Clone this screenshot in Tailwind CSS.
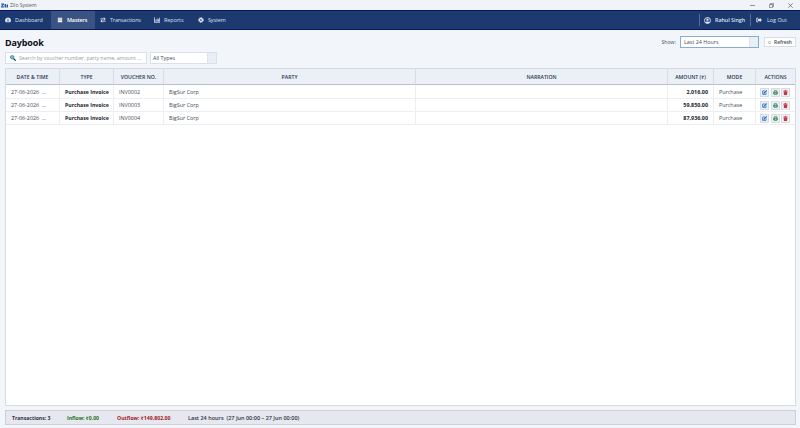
<!DOCTYPE html>
<html lang="en">
  <head>
    <meta charset="UTF-8" />
    <meta name="viewport" content="width=device-width, initial-scale=1.0" />
    <title>Zilo System</title>
    <script src="https://cdn.jsdelivr.net/npm/@tailwindcss/browser@4"></script>
  </head>
  <body class="flex h-screen flex-col overflow-hidden bg-[#f2f5fa] font-['Open_Sans','Noto_Sans',sans-serif] text-[5.4px] leading-none text-[#444b58]">
    <!-- Icons -->
    <svg class="hidden">
      <symbol id="gauge" viewBox="0 0 16 16">
        <path fill="currentColor" d="M8 1a8 8 0 0 0-6 13h12A8 8 0 0 0 8 1z" />
        <path stroke="#1c3a70" stroke-width="1.500" d="M8 10V5" />
        <circle cx="8" cy="10.500" r="1.600" fill="#1c3a70" />
      </symbol>
      <symbol id="stack" viewBox="0 0 16 16">
        <path fill="currentColor" d="M1 0h14v4.500H1zM1 5.500h14V10H1zM1 11h14v5H1z" />
      </symbol>
      <symbol id="swap" viewBox="0 0 16 16">
        <path fill="none" stroke="currentColor" stroke-width="2.500" d="M1 5h12M10 2l4 3-4 3M15 11H3M6 8l-4 3 4 3" />
      </symbol>
      <symbol id="chart" viewBox="0 0 16 16">
        <path fill="none" stroke="currentColor" stroke-width="2.300" d="M1 1v13h15M5 12V7M8.500 12V4M12 12V6M15 12V2" />
      </symbol>
      <symbol id="gear" viewBox="0 0 16 16">
        <circle cx="8" cy="8" r="4.200" fill="none" stroke="currentColor" stroke-width="3.800" />
        <circle cx="8" cy="8" r="6.500" fill="none" stroke="currentColor" stroke-width="2.500" stroke-dasharray="2.600 2.500" />
      </symbol>
      <symbol id="user" viewBox="0 0 16 16">
        <circle cx="8" cy="8" r="6.800" fill="none" stroke="currentColor" stroke-width="2.200" />
        <circle cx="8" cy="6" r="2.700" fill="currentColor" />
        <path fill="currentColor" d="M3 13c1-4 9-4 10 0l-5 2z" />
      </symbol>
      <symbol id="exit" viewBox="0 0 16 16">
        <path fill="none" stroke="currentColor" stroke-width="2.400" d="M6 3H2v10h4" />
        <path fill="currentColor" d="M5 5.500h5V2l6 6-6 6v-3.500H5z" />
      </symbol>
      <symbol id="edit" viewBox="0 0 16 16">
        <path fill="none" stroke="currentColor" stroke-width="2.500" d="M9 3H2v11h11V8" />
        <path stroke="currentColor" stroke-width="4" d="M5 11.500L15 1.500" />
      </symbol>
      <symbol id="print" viewBox="0 0 16 16">
        <path fill="none" stroke="currentColor" stroke-width="2.300" d="M4 7V2h8v5M4 10h8v4.500H4z" />
        <path fill="none" stroke="currentColor" stroke-width="3" d="M4 12H2V7h12v5h-2" />
      </symbol>
      <symbol id="trash" viewBox="0 0 16 16">
        <path fill="currentColor" d="M1 2h4l1-2h4l1 2h4v2H1zM2 5h12l-1 11H3z" />
      </symbol>
    </svg>

    <!-- Title bar -->
    <header class="flex h-[10px] shrink-0 items-center bg-[#f0f4f9] pl-px text-[#555]">
      <svg class="h-[5px] w-[7px]" viewBox="0 0 14 10">
        <path fill="#1f5da8" d="M0 1h6v2L3 7h3v2H0V7l3-4H0zM7 2h3v7H7zM11 3h3v6h-3z" />
      </svg>
      <span class="ml-[2px] text-[5px]">Zilo System</span>
      <div class="ml-auto flex items-center gap-[14px] pr-[7px]">
        <svg class="size-[5px]" viewBox="0 0 8 8" fill="none" stroke="#555"><path d="M0 4h8" /></svg>
        <svg class="size-[5px]" viewBox="0 0 8 8" fill="none" stroke="#555"><path d="M.5 2.500h5v5h-5zM2.500 2V.5h5v5H6" /></svg>
        <svg class="size-[5px]" viewBox="0 0 8 8" fill="none" stroke="#444"><path d="M.5.5l7 7M7.500.5l-7 7" /></svg>
      </div>
    </header>

    <!-- Navigation -->
    <nav class="flex h-5 shrink-0 items-stretch border-y border-[#07195c] bg-[#1c3a70] text-[5.4px] text-[#dbe3f0] [&_span]:pt-px">
      <a class="flex w-[51px] items-center gap-[4px] pl-[5px]"><svg class="size-[6px]"><use href="#gauge" /></svg><span>Dashboard</span></a>
      <a class="flex w-[44px] items-center gap-[4px] bg-[#3b5383] pl-[6px] font-semibold text-white"><svg class="size-[6px] p-[0.4px]"><use href="#stack" /></svg><span class="tracking-[-0.1px]">Masters</span></a>
      <a class="flex w-[54px] items-center gap-[4px] pl-[5px]"><svg class="size-[6px]"><use href="#swap" /></svg><span class="tracking-[-0.1px]">Transactions</span></a>
      <a class="flex w-[43px] items-center gap-[4px] pl-[5px]"><svg class="size-[6px]"><use href="#chart" /></svg><span>Reports</span></a>
      <a class="flex items-center gap-[4px] pl-[6px]"><svg class="size-[6px]"><use href="#gear" /></svg><span class="tracking-[-0.1px]">System</span></a>
      <div class="ml-auto flex w-[101px] items-center">
        <i class="h-3 w-px bg-[#536c98]"></i>
        <svg class="ml-[4px] size-[7px]"><use href="#user" /></svg>
        <span class="ml-[4px] w-[31px] font-semibold tracking-[-0.05px] whitespace-nowrap">Rahul Singh</span>
        <i class="ml-[4px] h-3 w-px bg-[#536c98]"></i>
        <svg class="ml-[5px] size-[6px]"><use href="#exit" /></svg>
        <span class="ml-[5px]">Log Out</span>
      </div>
    </nav>

    <main class="flex min-h-0 flex-1 flex-col pr-[4px] pb-[3px] pl-[5px]">
      <div class="flex h-[22px] shrink-0 items-center pt-[2px]">
        <h1 class="text-[9px] font-bold tracking-[-0.15px] text-[#0b0d18]">Daybook</h1>
        <span class="mr-[4px] ml-auto pt-px text-[5.2px]">Show:</span>
        <div class="flex h-3 w-[79px] items-stretch justify-between border border-[#86acd0] bg-white">
          <span class="self-center pt-px pl-[3px]">Last 24 Hours</span>
          <span class="w-[9px] border-l border-[#dde3ec] bg-[#eaeff6]"></span>
        </div>
        <button class="ml-[5px] flex h-[10px] w-[32px] items-center justify-center gap-[3px] border border-[#d9dee6] bg-white text-[4.8px] font-semibold"><svg class="size-[3px]" viewBox="0 0 8 8"><circle cx="4" cy="4" r="3" fill="none" stroke="#888" stroke-width="1.500" /></svg>Refresh</button>
      </div>

      <div class="flex h-3 shrink-0 gap-[3px]">
        <div class="flex w-[142px] items-center border border-[#dadfe8] bg-white pl-[4px] text-[#9a9da3]">
          <svg class="mr-[3px] size-[6px]" viewBox="0 0 12 12" fill="none">
            <circle cx="4.500" cy="4.500" r="3.500" fill="#70bce6" stroke="#3282b4" stroke-width="1.500" />
            <path stroke="#273b55" stroke-width="2.400" d="M7 7l4.500 4.500" />
          </svg>
          <span class="pt-px text-[5.3px] tracking-[-0.07px] whitespace-nowrap">Search by voucher number, party name, amount ...</span>
        </div>
        <div class="flex w-[67px] items-stretch justify-between border border-[#dadfe8] bg-white">
          <span class="self-center pt-px pl-[2px]">All Types</span>
          <span class="w-[9px] border-l border-[#dde3ec] bg-[#e9edf5]"></span>
        </div>
      </div>

      <!-- Voucher table -->
      <section class="mt-[4px] min-h-0 flex-1 border border-[#d5dae3] bg-white">
        <table class="w-full table-fixed border-separate border-spacing-0">
          <colgroup>
            <col class="w-[54px]" /><col class="w-[54px]" /><col class="w-[50px]" /><col class="w-[252px]" />
            <col class="w-[252px]" /><col class="w-[46px]" /><col class="w-[42px]" /><col />
          </colgroup>
          <thead>
            <tr class="h-4 bg-[#ebf0f7] text-[5.2px] text-[#2c3850] *:border-r *:border-b *:border-r-[#d6dbe5] *:border-b-[#b8bfd3] *:p-0 *:pt-[2px] *:font-semibold *:last:border-r-0">
              <th>DATE &amp; TIME</th><th>TYPE</th><th>VOUCHER NO.</th><th>PARTY</th>
              <th>NARRATION</th><th>AMOUNT (₹)</th><th>MODE</th><th>ACTIONS</th>
            </tr>
          </thead>
          <tbody id="rows"></tbody>
        </table>
      </section>

      <footer class="mt-[4px] flex h-[15px] shrink-0 items-center border border-[#cdd0d8] bg-[#e7e8ef] pt-[2px] pl-[6px] text-[5.1px] font-bold whitespace-nowrap text-[#2b3140]">
        <span class="w-[55px]">Transactions: 3</span>
        <span class="w-[50px] text-[#237123]">Inflow: ₹0.00</span>
        <span class="w-[71px] text-[5.2px] text-[#a02222]">Outflow: ₹149,802.00</span>
        <span class="text-[5.5px] font-semibold">Last 24 hours&nbsp; (27 Jun 00:00 – 27 Jun 00:00)</span>
      </footer>
    </main>

    <script>
      const vouchers = [
        { no: "INV0002", amount: "2,016.00" },
        { no: "INV0003", amount: "59,850.00" },
        { no: "INV0004", amount: "87,936.00" },
      ];
      const button = "flex h-[9px] w-[9px] items-center justify-center border border-[#d5dbe5] bg-[#edf1f7]";

      document.getElementById("rows").innerHTML = vouchers
        .map(
          (v) => `
        <tr class="h-[13px] whitespace-nowrap first:h-[14px] *:border-r *:border-b *:border-[#eceef2] *:p-0 *:pt-[2px] *:pl-[5px] *:last:border-r-0 *:last:pt-px">
          <td>27-06-2026 &nbsp;...</td>
          <td class="text-[5.2px] font-bold text-[#20242e]">Purchase Invoice</td>
          <td>${v.no}</td>
          <td>BigSur Corp</td>
          <td></td>
          <td class="text-right font-bold text-[#20242e]"><span class="pr-[5px]">${v.amount}</span></td>
          <td>Purchase</td>
          <td>
            <div class="-ml-px flex gap-[1.5px]">
              <span class="${button} text-[#256cc0]"><svg class="size-[5px]"><use href="#edit" /></svg></span>
              <span class="${button} text-[#30834d]"><svg class="size-[5px]"><use href="#print" /></svg></span>
              <span class="${button} text-[#cb3440]"><svg class="size-[5px]"><use href="#trash" /></svg></span>
            </div>
          </td>
        </tr>`
        )
        .join("");
    </script>
  </body>
</html>
